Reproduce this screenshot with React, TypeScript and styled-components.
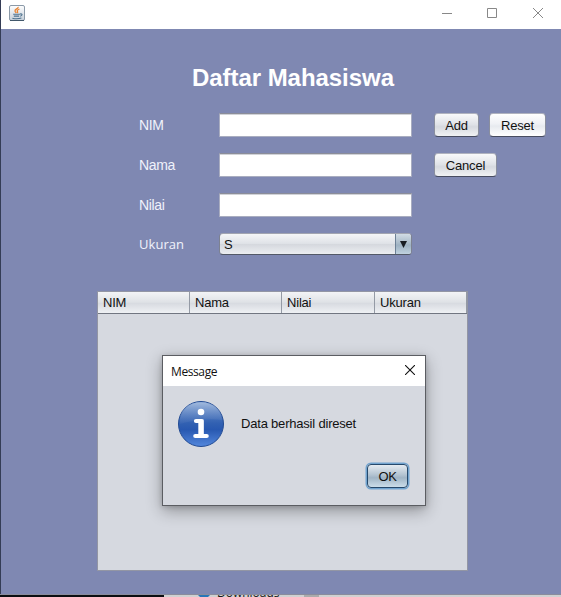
import React from "react";
import styled, { createGlobalStyle } from "styled-components";

const Global = createGlobalStyle`
  * { box-sizing: border-box; }
  html, body { margin: 0; padding: 0; overflow: hidden; }
  body { font: 13px "Liberation Sans", Arial, sans-serif; color: #111; letter-spacing: -0.2px; }
`;

const Screen = styled.div`
  width: 561px;
  height: 597px;
  display: flex;
  flex-direction: column;
  position: relative;
  overflow: hidden;
`;

const Frame = styled.div`
  height: 594px;
  flex: none;
  display: flex;
  flex-direction: column;
  border-left: 1px solid #343c55;
`;

const TitleBar = styled.header`
  height: 29px;
  flex: none;
  display: flex;
  align-items: flex-start;
  background: #fff;
  padding: 5px 18px 0 8px;
`;

const WindowControls = styled.div`
  display: grid;
  grid-template-columns: 45px 46px 10px;
  margin: 3px 0 0 auto;
`;

const Content = styled.main`
  flex: 1;
  display: flex;
  flex-direction: column;
  background: #7f88b2;
`;

const Heading = styled.h1`
  margin: 35px 0 0 191px;
  height: 28px;
  font: bold 24px/28px "Liberation Sans", Arial, sans-serif;
  letter-spacing: -0.05px;
  color: #fff;
  white-space: nowrap;
`;

const Form = styled.form`
  display: grid;
  grid-template-columns: 80px 193px auto;
  grid-template-rows: 40px 40px 40px 38px;
  margin: 13px 0 0 138px;
  align-items: center;
`;

const Label = styled.label<{ $wide?: boolean }>`
  color: #f0f2fb;
  font-family: ${(p) => (p.$wide ? '"Open Sans", sans-serif' : '"Liberation Sans", Arial, sans-serif')};
  font-size: ${(p) => (p.$wide ? "13px" : "14px")};
  line-height: 20px;
  letter-spacing: ${(p) => (p.$wide ? "0.05px" : "-0.35px")};
`;

const Field = styled.input`
  width: 193px;
  height: 24px;
  padding: 2px 6px;
  border: 1px solid #a9adc0;
  border-top-color: #8b8d99;
  border-radius: 0;
  background: #fff;
  box-shadow: inset 0 1px 0 #d0d2d8;
  outline: none;
  font: inherit;
`;

const Combo = styled.div`
  width: 193px;
  height: 22px;
  display: flex;
  border: 1px solid #7d8291;
  border-top-color: #a2a5b1;
  border-bottom-color: #535967;
  border-radius: 4px;
  overflow: hidden;
  background: linear-gradient(#f5f6f8, #dfe2e7 48%, #d5d8de 52%, #eceef1);
`;

const ComboValue = styled.span`
  flex: 1;
  padding-left: 4px;
  line-height: 22px;
`;

const ComboArrow = styled.span`
  width: 16px;
  display: flex;
  align-items: center;
  justify-content: center;
  border-left: 1px solid #6d8196;
  background: linear-gradient(#d2dce5, #a5b7c6 50%, #9db1c2 55%, #c0d2df);
`;

const Actions = styled.div`
  display: flex;
  gap: 10px;
  padding-left: 22px;
`;

const Button = styled.button<{ $width: number; $bright?: boolean }>`
  width: ${(p) => p.$width}px;
  height: 24px;
  padding: 1px 0 0;
  border: 1px solid #8a8f9e;
  border-top-color: #b0b3bf;
  border-bottom-color: #474c60;
  border-radius: 4px;
  background: ${(p) =>
    p.$bright
      ? "linear-gradient(#fff, #eff1f5 45%, #e7eaef 55%, #fff)"
      : "linear-gradient(#f9f9fb, #dfe2e7 48%, #d6d9df 58%, #f0f2f4)"};
  font: 13px "Liberation Sans", Arial, sans-serif;
  letter-spacing: -0.2px;
  color: #111;
`;

const TablePane = styled.section`
  width: 371px;
  height: 280px;
  margin: 28px 0 0 96px;
  border: 1px solid #9396a4;
  background: #d6d9e0;
`;

const TableHead = styled.div`
  display: grid;
  grid-template-columns: 92px 92px 93px 92px;
  height: 22px;
  border-bottom: 1px solid #717681;
  background: linear-gradient(#f3f4f6, #dfe2e6 48%, #d8dbe1 55%, #eff1f4);
`;

const HeadCell = styled.div`
  padding-left: 5px;
  line-height: 21px;
  border-right: 1px solid #949aa5;
`;

const Dialog = styled.div`
  position: absolute;
  left: 162px;
  top: 355px;
  width: 264px;
  height: 151px;
  display: flex;
  flex-direction: column;
  border: 1px solid #5b5d62;
  background: #d6d9e0;
  box-shadow: 0 5px 15px rgba(0, 0, 0, 0.32), 0 1px 5px rgba(0, 0, 0, 0.16);
`;

const DialogTitle = styled.div`
  height: 30px;
  flex: none;
  display: flex;
  align-items: center;
  justify-content: space-between;
  padding: 0 10px 0 8px;
  background: #fff;
  font: 12px "Open Sans", sans-serif;
  letter-spacing: -0.4px;
`;

const DialogClose = styled.svg`
  margin-bottom: 2px;
`;

const DialogBody = styled.div`
  display: flex;
  align-items: center;
  gap: 16px;
  padding: 14px 0 0 14px;
`;

const Notice = styled.span`
  padding-bottom: 2px;
`;

const DialogFooter = styled.div`
  display: flex;
  justify-content: flex-end;
  padding: 16px 17px 0 0;
`;

const OkButton = styled.button`
  width: 41px;
  height: 24px;
  padding: 1px 0 0;
  border: 1px solid #26496c;
  border-radius: 4px;
  background: linear-gradient(#e5ebf1, #b3c3d1 45%, #a0b4c5 58%, #cbdde9);
  box-shadow: 0 0 0 1.5px #72a4cf;
  font: 13px "Liberation Sans", Arial, sans-serif;
  letter-spacing: -0.4px;
  color: #111;
`;

const Behind = styled.div`
  height: 3px;
  display: grid;
  grid-template-columns: 164px 397px;
  border-top: 1px solid #8a8c9c;
  background: #0b0e12;
`;

const BehindPanel = styled.div`
  height: 2px;
  display: flex;
  align-items: flex-start;
  background: #d0d1d2;
  overflow: hidden;
`;

const FolderEdge = styled.svg`
  margin-left: 34px;
  flex: none;
`;

const BehindText = styled.span`
  width: 60px;
  margin: -9px 0 0 7px;
  font: 12px/13px "Open Sans", sans-serif;
  letter-spacing: 0;
  color: #181818;
`;

const ScrollEdge = styled.span`
  width: 15px;
  height: 2px;
  margin-left: 27px;
  background: #aaabac;
`;

function JavaIcon() {
  return (
    <svg width="16" height="16" viewBox="0 0 16 16" fill="none">
      <defs>
        <linearGradient id="java-bg" x1="0" y1="0" x2="0" y2="1">
          <stop stopColor="#fff" />
          <stop offset="1" stopColor="#c4ced9" />
        </linearGradient>
      </defs>
      <rect x=".5" y=".5" width="15" height="15" rx="1.5" fill="url(#java-bg)" stroke="#8b9aa8" />
      <path d="M1 15.5h14" stroke="#42586b" />
      <path d="M9.2 1.8C9.5 3.8 5.7 4 6 6c.1 1 .9 1.2 1.3 2M10.5 4C8.8 4.7 7.7 5.5 8.4 6.5c.4.5.4 1-.1 1.5" stroke="#e98330" strokeWidth="1.3" />
      <path d="M4.2 9.2h6.7M4.8 11.1h5.4M3.4 13.2c3 .7 6.5.6 9-.2M11 9c2.8-.8 2.6 1.7.2 2.2" stroke="#4c718e" strokeWidth="1.1" />
    </svg>
  );
}

function InfoIcon() {
  return (
    <svg width="48" height="48" viewBox="0 0 48 48">
      <defs>
        <linearGradient id="info-base" x1="0" y1="0" x2="0" y2="1">
          <stop stopColor="#7296d0" />
          <stop offset=".48" stopColor="#3261b2" />
          <stop offset=".62" stopColor="#2858b0" />
          <stop offset="1" stopColor="#5387dc" />
        </linearGradient>
        <linearGradient id="info-shine" x1="0" y1="0" x2="0" y2="1">
          <stop stopColor="#a1badd" />
          <stop offset="1" stopColor="#466fb8" stopOpacity=".3" />
        </linearGradient>
      </defs>
      <circle cx="24" cy="24" r="22.5" fill="url(#info-base)" stroke="#224b93" />
      <path d="M2.8 20C4 9 12.5 2.3 24 2.3S44 9 45.2 20C33 18 17 19.5 2.8 24Z" fill="url(#info-shine)" />
      <circle cx="24" cy="12" r="3.3" fill="#fff" />
      <path d="M19 21h5.5v15M18.3 36h11.4" fill="none" stroke="#fff" strokeLinecap="round" strokeLinejoin="round" strokeWidth="4.2" />
      <path d="M21.3 19.5h5.3v17h-5.3z" fill="#fff" />
    </svg>
  );
}

const columns = ["NIM", "Nama", "Nilai", "Ukuran"];

export default function App() {
  return (
    <Screen>
      <Global />
      <Frame>
        <TitleBar>
          <JavaIcon />
          <WindowControls>
            <svg width="10" height="10"><path d="M0 5.5h10" stroke="#888" /></svg>
            <svg width="10" height="10"><path d="M.5.5h9v9h-9z" fill="none" stroke="#888" /></svg>
            <svg width="10" height="10"><path d="m0 0 10 10M10 0 0 10" stroke="#888" /></svg>
          </WindowControls>
        </TitleBar>
        <Content>
          <Heading>Daftar Mahasiswa</Heading>
          <Form>
            <Label htmlFor="nim">NIM</Label>
            <Field id="nim" />
            <Actions>
              <Button type="button" $width={45}>Add</Button>
              <Button type="button" $width={57} $bright>Reset</Button>
            </Actions>
            <Label htmlFor="nama">Nama</Label>
            <Field id="nama" />
            <Actions><Button type="button" $width={63}>Cancel</Button></Actions>
            <Label htmlFor="nilai">Nilai</Label>
            <Field id="nilai" />
            <span />
            <Label $wide>Ukuran</Label>
            <Combo>
              <ComboValue>S</ComboValue>
              <ComboArrow><svg width="7" height="7"><path d="M0 0h7L3.5 7Z" fill="#171c22" /></svg></ComboArrow>
            </Combo>
          </Form>
          <TablePane>
            <TableHead>{columns.map((name) => <HeadCell key={name}>{name}</HeadCell>)}</TableHead>
          </TablePane>
        </Content>
      </Frame>
      <Behind>
        <span />
        <BehindPanel>
          <FolderEdge width="12" height="2"><path d="M0 0h12L10 2H2Z" fill="#2876b8" /></FolderEdge>
          <BehindText>Downloads</BehindText>
          <ScrollEdge />
        </BehindPanel>
      </Behind>
      <Dialog role="dialog" aria-label="Message">
        <DialogTitle>
          Message
          <DialogClose width="10" height="10"><path d="m0 0 10 10M10 0 0 10" stroke="#111" strokeWidth="1.1" /></DialogClose>
        </DialogTitle>
        <DialogBody><InfoIcon /><Notice>Data berhasil direset</Notice></DialogBody>
        <DialogFooter><OkButton>OK</OkButton></DialogFooter>
      </Dialog>
    </Screen>
  );
}
